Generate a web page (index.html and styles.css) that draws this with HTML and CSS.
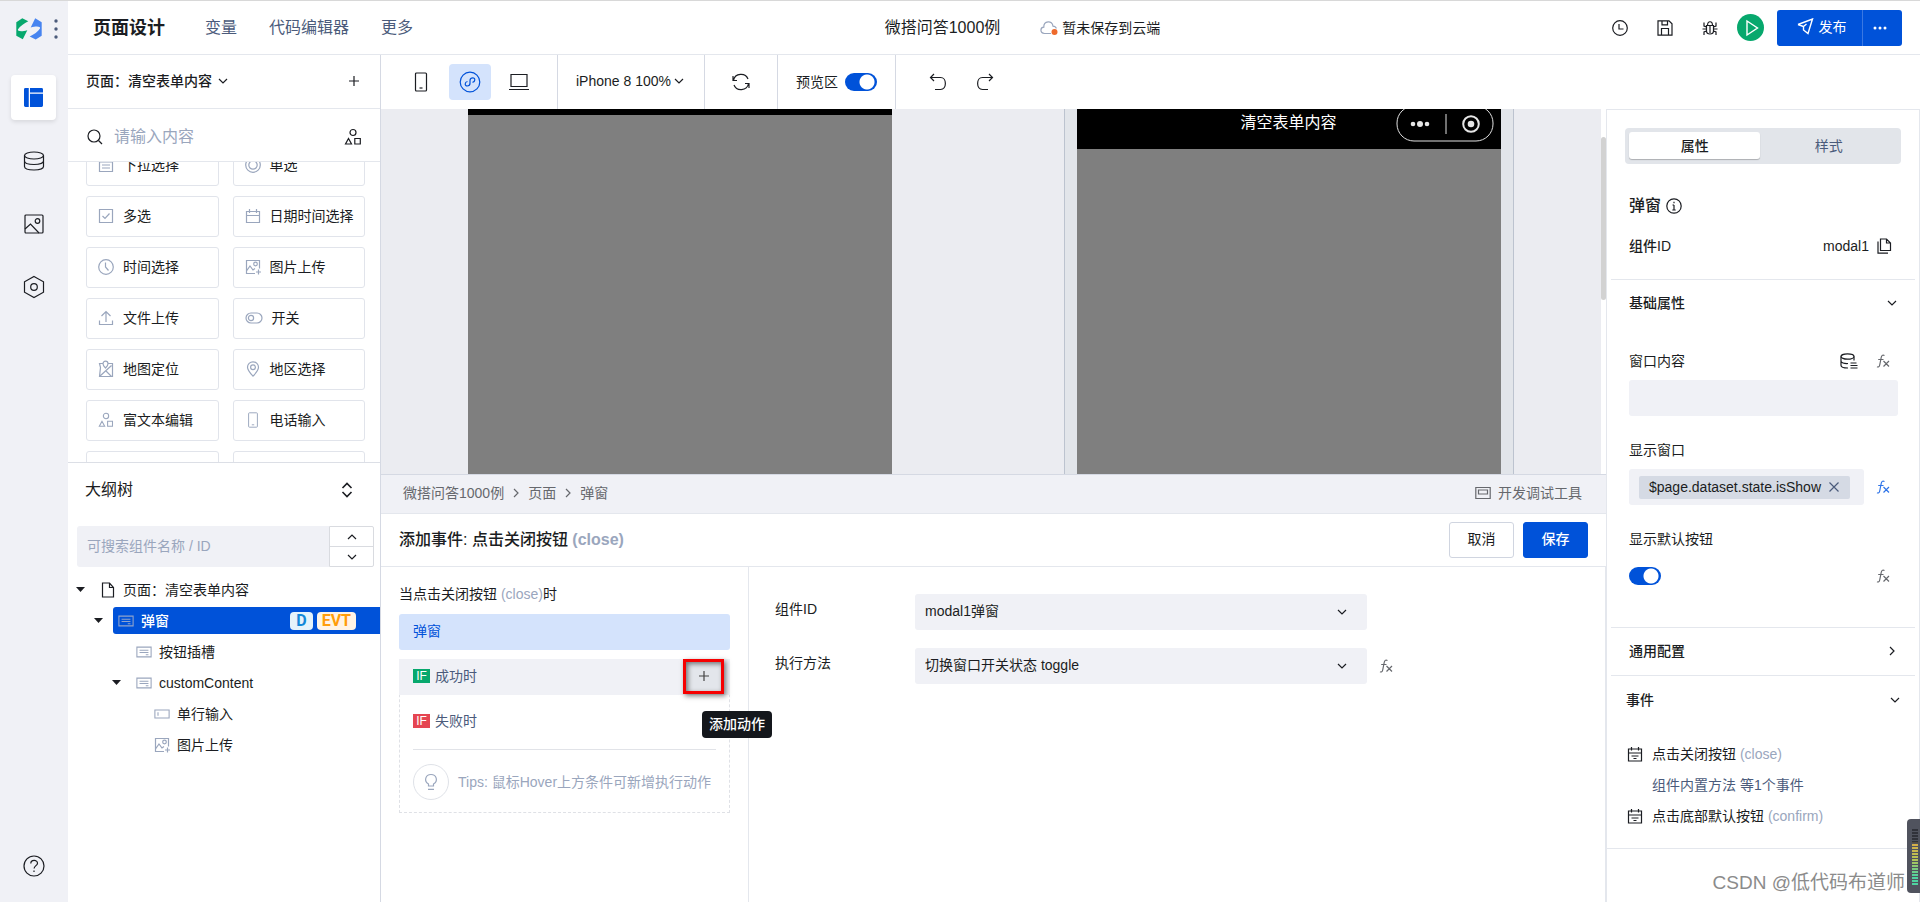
FILE: index.html
```html
<!DOCTYPE html>
<html lang="zh-CN">
<head>
<meta charset="utf-8">
<title>页面设计 - 微搭问答1000例</title>
<link rel="stylesheet" href="styles.css">
</head>
<body>
<svg class="sprite" aria-hidden="true">
  <symbol id="i-down" viewBox="0 0 10 10"><path d="M1 3l4 4 4-4"/></symbol>
  <symbol id="i-up" viewBox="0 0 10 10"><path d="M1 7l4-4 4 4"/></symbol>
  <symbol id="i-right" viewBox="0 0 10 10"><path d="M3 1l4 4-4 4"/></symbol>
  <symbol id="i-plus" viewBox="0 0 12 12"><path d="M6 1v10M1 6h10"/></symbol>
  <symbol id="i-shapes" viewBox="0 0 18 18"><circle cx="9" cy="4.5" r="3"/><path d="M4.5 10.5L1.5 16h6zM10.8 10.5h5.5V16h-5.5z"/></symbol>
  <symbol id="i-list" viewBox="0 0 16 16"><path d="M1.500 1.500h13v13h-13zM1.500 5h13M4 8h8M4 11h8"/></symbol>
  <symbol id="i-radio" viewBox="0 0 16 16"><circle cx="8" cy="8" r="7.300"/><circle cx="8" cy="8" r="4.200"/></symbol>
  <symbol id="i-check" viewBox="0 0 16 16"><path d="M1.500 1.500h13v13h-13zM4.500 8l2.500 2.500 4.500-5"/></symbol>
  <symbol id="i-calendar" viewBox="0 0 16 16"><path d="M1.500 3.500h13v11h-13zM1.500 7.500h13M4.500 1v4M11.500 1v4"/></symbol>
  <symbol id="i-clock" viewBox="0 0 16 16"><circle cx="8" cy="8" r="7.300"/><path d="M7.500 3.500V8l3 3.500"/></symbol>
  <symbol id="i-imgadd" viewBox="0 0 16 16"><path d="M10 14.500H1.500v-13h13v8M1.500 12L5 7l3 4 2-1.500M13.500 10.500v5M11 13h5"/><circle cx="10.500" cy="5" r="1.800"/></symbol>
  <symbol id="i-upload" viewBox="0 0 16 16"><path d="M8 12V1.500M3.500 6L8 1.500 12.500 6M1.500 10.500v4h13v-4"/></symbol>
  <symbol id="i-switch" viewBox="0 0 18 12"><rect x="1" y="1" width="16" height="10" rx="5"/><circle cx="6" cy="6" r="2.600"/></symbol>
  <symbol id="i-map" viewBox="0 0 16 18"><path d="M5 3.500H1.500l1 4-1 9h13v-13H10.500M1.500 16.500l12-11M8 11l5.500 5.500M7.500 8C5.500 6 5 4.800 5 3.700a2.500 2.500 0 015 0C10 4.800 9.500 6 7.500 8z"/></symbol>
  <symbol id="i-pin" viewBox="0 0 14 16"><path d="M7 15.200C3 11 1.500 8.700 1.500 6.300a5.500 5.500 0 0111 0c0 2.400-1.500 4.700-5.500 8.900z"/><circle cx="7" cy="6.300" r="2.400"/></symbol>
  <symbol id="i-phone" viewBox="0 0 14 20"><rect x="1.500" y="1" width="11" height="18" rx="1"/><path d="M5.500 16h3"/></symbol>
  <symbol id="i-block" viewBox="0 0 18 14"><path d="M1 1.500h16v11H1zM4 5h10M4 7.500h10M11 10h3"/></symbol>
  <symbol id="i-input" viewBox="0 0 18 12"><path d="M1 1.500h16v9H1zM4.500 4v4"/></symbol>
  <symbol id="i-file" viewBox="0 0 14 16"><path d="M1.500 1h7l4 4.500V15h-11zM8.500 1v4.500h4"/></symbol>
  <symbol id="i-fx" viewBox="0 0 14 14"><path d="M8.500 1.500C6.500.5 5.600 1.500 5.200 3.500L3.700 11C3.300 13 2.300 13.300 1 12.700M2.200 5.500h5.300M7.500 7l5.500 5.500M13 7l-5.500 5.500"/></symbol>
  <symbol id="i-event" viewBox="0 0 16 16"><path d="M1.500 3h13v12h-13zM1.500 7h13M4.500 1v3.500M11.500 1v3.500M4.500 10h7M6.500 12.500h3"/></symbol>
  <symbol id="i-db" viewBox="0 0 22 20"><ellipse cx="11" cy="4.500" rx="9.500" ry="3.500"/><path d="M1.500 4.500v11c0 2 4 3.500 9.500 3.500s9.500-1.500 9.500-3.500v-11M1.500 10c0 2 4 3.500 9.500 3.500s9.500-1.500 9.500-3.500"/></symbol>
</svg>

<nav class="rail" aria-label="主导航">
  <div class="rail-brand">
    <svg class="logo" viewBox="0 0 26 22"><path fill="#07a86d" d="M.3 4.300L6.300.3 12.300 3.300C8 5.300 4 8.300 2 11.300 1 13.300 5.300 14 11.300 12.300L6.800 21.300.3 17.800z"/><path fill="#4784f0" d="M19.200.3l6.500 4v13.500l-6 3.700-6-3C18 16.500 22 13.500 24 10.500 25 8.300 20.500 7.800 14.700 9.500z"/></svg>
    <svg class="dots-v" viewBox="0 0 4 20"><circle cx="2" cy="2" r="1.700"/><circle cx="2" cy="10" r="1.700"/><circle cx="2" cy="18" r="1.700"/></svg>
  </div>
  <button class="rail-item active" aria-label="页面"><svg class="fill-icon" viewBox="0 0 20 20"><path d="M0 1.500Q0 0 1.500 0H5v20H1.500Q0 20 0 18.500zM6.300 0H18.500Q20 0 20 1.500V4.800H6.300zM6.300 6H20V18.500Q20 20 18.500 20H6.300z"/></svg></button>
  <button class="rail-item" aria-label="数据源"><svg class="icon" width="22" height="20"><use href="#i-db"/></svg></button>
  <button class="rail-item" aria-label="素材"><svg class="icon" width="20" height="20" viewBox="0 0 20 20"><rect x="1" y="1" width="18" height="18" rx="1"/><path d="M1 15l5.500-5L15 19"/><circle cx="13.500" cy="7" r="2.300"/></svg></button>
  <button class="rail-item" aria-label="设置"><svg class="icon" width="22" height="24" viewBox="0 0 22 24"><path d="M11 1.500l9.500 5.300v10.400L11 22.500l-9.500-5.300V6.800z"/><circle cx="11" cy="12" r="3.300"/></svg></button>
  <button class="rail-help" aria-label="帮助"><svg class="icon" width="22" height="22" viewBox="0 0 22 22"><circle cx="11" cy="11" r="10"/><path d="M7.800 8.500c0-4 6.700-4 6.700-.3 0 2.300-3.400 2.600-3.400 5.300M11 15.500v1.500"/></svg></button>
</nav>

<div class="app">
  <header class="topbar">
    <nav class="topnav">
      <h1>页面设计</h1>
      <a href="#var">变量</a>
      <a href="#code">代码编辑器</a>
      <a href="#more">更多</a>
    </nav>
    <div class="doc">
      <span class="doc-name">微搭问答1000例</span>
      <span class="doc-state"><svg class="icon" width="18" height="16" viewBox="0 0 18 16"><path class="cloud" d="M11 13.500H4.500C-.3 13 0 7.500 3.800 7.200 3.500.5 12.500 0 13 6.200c1.500.2 3 .8 3.300 2.300"/><circle class="cloud-dot" cx="14.500" cy="12" r="3"/></svg>暂未保存到云端</span>
    </div>
    <div class="top-actions">
      <button class="ghost" aria-label="历史"><svg class="icon" width="16" height="16" viewBox="0 0 16 16"><circle cx="8" cy="8" r="7.300"/><path d="M7 4v5h4.500"/></svg></button>
      <button class="ghost" aria-label="保存"><svg class="icon" width="16" height="16" viewBox="0 0 16 16"><path d="M1 .8h11l3 3V15.200H1zM5 .8v4h5.500v-4M4.500 15V8.500h7V15"/></svg></button>
      <button class="ghost" aria-label="调试"><svg class="icon" width="16" height="16" viewBox="0 0 16 16"><path d="M4.500 5.500h7v5.500c0 4-7 4-7 0zM5.500 5.500c0-5 5-5 5 0M8 5.500V13M4.500 7L2 6V2.500M11.500 7L14 6V2.500M.5 9h4M11.500 9h4M4.500 11L2 12v3M11.500 11l2.500 1v3"/></svg></button>
      <button class="run" aria-label="预览"><svg width="14" height="18" viewBox="0 0 14 18"><path d="M2 2l10.500 7L2 16z"/></svg></button>
      <div class="publish">
        <button class="publish-main"><svg width="17" height="17" viewBox="0 0 17 17"><path d="M1 6.500L15.500 1 11 15.500 6.500 12V8.500l3-2.500M6.500 12v-3.500L1 6.500"/></svg>发布</button>
        <button class="publish-more" aria-label="更多操作"><svg width="14" height="4" viewBox="0 0 14 4"><circle cx="2" cy="2" r="1.500"/><circle cx="7" cy="2" r="1.500"/><circle cx="12" cy="2" r="1.500"/></svg></button>
      </div>
    </div>
  </header>

  <div class="workspace">
    <aside class="left">
      <div class="page-pick">
        <button class="page-name">页面：清空表单内容<svg class="icon" width="10" height="10"><use href="#i-down"/></svg></button>
        <button class="ghost" aria-label="新建页面"><svg class="icon" width="12" height="12"><use href="#i-plus"/></svg></button>
      </div>
      <label class="search">
        <svg class="icon" width="16" height="16" viewBox="0 0 16 16"><circle cx="7" cy="7" r="6"/><path d="M11.500 11.500L15 15"/></svg>
        <input type="text" placeholder="请输入内容" aria-label="搜索组件">
        <svg class="icon" width="18" height="18"><use href="#i-shapes"/></svg>
      </label>
      <div class="components">
        <div class="component-grid">
          <button><svg class="icon" width="16" height="16"><use href="#i-list"/></svg>下拉选择</button>
          <button><svg class="icon" width="16" height="16"><use href="#i-radio"/></svg>单选</button>
          <button><svg class="icon" width="16" height="16"><use href="#i-check"/></svg>多选</button>
          <button><svg class="icon" width="16" height="16"><use href="#i-calendar"/></svg>日期时间选择</button>
          <button><svg class="icon" width="16" height="16"><use href="#i-clock"/></svg>时间选择</button>
          <button><svg class="icon" width="16" height="16"><use href="#i-imgadd"/></svg>图片上传</button>
          <button><svg class="icon" width="16" height="16"><use href="#i-upload"/></svg>文件上传</button>
          <button><svg class="icon" width="18" height="12"><use href="#i-switch"/></svg>开关</button>
          <button><svg class="icon" width="16" height="18"><use href="#i-map"/></svg>地图定位</button>
          <button><svg class="icon" width="16" height="16"><use href="#i-pin"/></svg>地区选择</button>
          <button><svg class="icon" width="16" height="16"><use href="#i-shapes"/></svg>富文本编辑</button>
          <button><svg class="icon" width="16" height="16"><use href="#i-phone"/></svg>电话输入</button>
          <button aria-label="组件"></button>
          <button aria-label="组件"></button>
        </div>
      </div>
      <section class="outline">
        <header><h2>大纲树</h2><button class="ghost" aria-label="展开"><svg class="icon strong" width="12" height="16" viewBox="0 0 12 16"><path d="M1.500 6L6 1.500 10.500 6M1.500 10L6 14.500 10.500 10"/></svg></button></header>
        <div class="tree-search">
          <input type="text" placeholder="可搜索组件名称 / ID" aria-label="搜索组件名称">
          <div class="stepper">
            <button aria-label="上一个"><svg class="icon" width="10" height="10"><use href="#i-up"/></svg></button>
            <button aria-label="下一个"><svg class="icon" width="10" height="10"><use href="#i-down"/></svg></button>
          </div>
        </div>
        <ul class="tree">
          <li class="d0"><i class="caret"></i><div class="node"><svg class="icon" width="16" height="16"><use href="#i-file"/></svg>页面：清空表单内容</div></li>
          <li class="d1"><i class="caret"></i><div class="node selected"><svg class="icon" width="16" height="14"><use href="#i-block"/></svg>弹窗<span class="badge data">D</span><span class="badge evt">EVT</span></div></li>
          <li class="d2"><i class="caret none"></i><div class="node"><svg class="icon soft" width="16" height="14"><use href="#i-block"/></svg>按钮插槽</div></li>
          <li class="d2"><i class="caret"></i><div class="node"><svg class="icon soft" width="16" height="14"><use href="#i-block"/></svg>customContent</div></li>
          <li class="d3"><i class="caret none"></i><div class="node"><svg class="icon soft" width="16" height="12"><use href="#i-input"/></svg>单行输入</div></li>
          <li class="d3"><i class="caret none"></i><div class="node"><svg class="icon soft" width="16" height="16"><use href="#i-imgadd"/></svg>图片上传</div></li>
        </ul>
      </section>
    </aside>

    <div class="stage">
      <div class="toolbar">
        <div class="tool-group devices">
          <button aria-label="手机"><svg class="icon" width="14" height="20"><use href="#i-phone"/></svg></button>
          <button class="on" aria-label="小程序"><svg class="icon" width="22" height="22" viewBox="0 0 22 22"><circle cx="11" cy="11" r="9.800"/><path d="M8.500 10.500c-3 .5-3 4.500-.3 4.500 1.600 0 2.800-1 2.800-2.700V9.500c0-1.700 1.200-2.700 2.800-2.700 2.700 0 2.700 4-.3 4.500"/></svg></button>
          <button aria-label="电脑"><svg class="icon" width="20" height="18" viewBox="0 0 20 18"><path d="M2 1.500h16v12H2zM0 16.500h20"/></svg></button>
        </div>
        <label class="tool-group zoom"><select aria-label="设备"><option>iPhone 8 100%</option></select><svg class="icon" width="10" height="10"><use href="#i-down"/></svg></label>
        <div class="tool-group refresh"><button class="ghost" aria-label="刷新"><svg class="icon" width="18" height="18" viewBox="0 0 18 18"><path d="M1.500 7.500C3-.2 13.500-.5 16 6M16.500 10.500C15 18.200 4.500 18.500 2 12M1 3v4.500h4M17 15v-4.500h-4"/></svg></button></div>
        <label class="tool-group preview">预览区<input class="switch" type="checkbox" checked></label>
        <div class="tool-group history">
          <button class="ghost" aria-label="撤销"><svg class="icon" width="18" height="18" viewBox="0 0 18 18"><path d="M5 1L1.500 4.500 5 8M1.500 4.500h10c6.500 0 6.500 12 0 12H6"/></svg></button>
          <button class="ghost" aria-label="重做"><svg class="icon" width="18" height="18" viewBox="0 0 18 18"><path d="M13 1l3.500 3.500L13 8M16.500 4.500h-10c-6.500 0-6.500 12 0 12H12"/></svg></button>
        </div>
      </div>

      <div class="stage-body">
        <main class="center">
          <div class="canvas">
            <div class="phone"><div class="phone-edge"></div></div>
            <div class="preview-frame">
              <div class="phone">
                <div class="mini-head">
                  <span class="mini-title">清空表单内容</span>
                  <svg class="capsule" width="98" height="38" viewBox="0 0 98 38"><rect x="1" y="1" width="96" height="35" rx="17"/><g class="solid"><circle cx="17" cy="19" r="2.300"/><circle cx="24" cy="19" r="3"/><circle cx="31" cy="19" r="2.300"/><circle cx="75" cy="19" r="3.300"/></g><path d="M50 9v20"/><circle class="ring" cx="75" cy="19" r="7.800"/></svg>
                </div>
              </div>
            </div>
            <div class="scrollbar"><div class="thumb"></div></div>
          </div>

          <section class="dock">
            <div class="crumbs">
              <span>微搭问答1000例</span><svg class="icon" width="10" height="10"><use href="#i-right"/></svg><span>页面</span><svg class="icon" width="10" height="10"><use href="#i-right"/></svg><span>弹窗</span>
              <button class="devtool"><svg class="icon" width="16" height="14" viewBox="0 0 16 14"><path d="M.8 1.500h14.400v11H.8zM3.500 4h9v4h-9z"/></svg>开发调试工具</button>
            </div>
            <div class="dock-head">
              <h2>添加事件: 点击关闭按钮 <b>(close)</b></h2>
              <button class="btn">取消</button>
              <button class="btn primary">保存</button>
            </div>
            <div class="dock-body">
              <div class="flow">
                <p class="flow-title">当点击关闭按钮 <em>(close)</em>时</p>
                <button class="action">弹窗</button>
                <div class="branches">
                  <div class="branch hover"><span class="if ok">IF</span>成功时
                    <button class="add" aria-label="添加动作"><svg class="icon" width="12" height="12"><use href="#i-plus"/></svg></button>
                    <span class="tooltip">添加动作</span>
                  </div>
                  <div class="branch"><span class="if bad">IF</span>失败时</div>
                  <div class="tips"><span class="bulb"><svg class="icon soft" width="14" height="18" viewBox="0 0 14 18"><path d="M4.500 13v-2C-.5 8 1.500 1.500 7 1.500S14.500 8 9.500 11v2zM4 16.300h6"/></svg></span>Tips: 鼠标Hover上方条件可新增执行动作</div>
                </div>
              </div>
              <form class="config">
                <label for="cid">组件ID</label>
                <div class="select"><select id="cid"><option>modal1弹窗</option></select><svg class="icon" width="10" height="10"><use href="#i-down"/></svg></div>
                <span></span>
                <label for="method">执行方法</label>
                <div class="select"><select id="method"><option>切换窗口开关状态 toggle</option></select><svg class="icon" width="10" height="10"><use href="#i-down"/></svg></div>
                <button type="button" class="ghost fx" aria-label="表达式"><svg class="icon" width="14" height="14"><use href="#i-fx"/></svg></button>
              </form>
            </div>
          </section>
        </main>

        <aside class="props">
          <div class="tabs" role="tablist"><button role="tab" aria-selected="true">属性</button><button role="tab" aria-selected="false">样式</button></div>
          <div class="props-head">
            <h2>弹窗<svg class="icon" width="16" height="16" viewBox="0 0 16 16"><circle cx="8" cy="8" r="7.200"/><path d="M8 3.800v1.500M8 7v5M6.500 7H8M6.300 12h3.400"/></svg></h2>
            <div class="id-row"><strong>组件ID</strong><span>modal1</span><svg class="icon" width="16" height="16" viewBox="0 0 16 16"><path d="M4.500 1h6l4 4v7.500h-10zM10.500 1v4h4M2 3.500v11.700h10"/></svg></div>
          </div>
          <button class="fold">基础属性<svg class="icon" width="10" height="10"><use href="#i-down"/></svg></button>
          <div class="fields">
            <div class="field">
              <div class="field-label"><label for="content">窗口内容</label><svg class="icon" width="18" height="16" viewBox="0 0 18 16"><ellipse cx="7.500" cy="3.500" rx="6.500" ry="2.700"/><path d="M1 3.500v8.700C1 14 4 15 8 15M14 3.500V7.500M1 8c0 1.800 3 2.700 7 2.500M10.500 10h6M10.500 12.500h7M10.500 15h7"/></svg><button class="ghost fx" aria-label="表达式"><svg class="icon" width="14" height="14"><use href="#i-fx"/></svg></button></div>
              <input class="text" id="content" type="text">
            </div>
            <div class="field">
              <div class="field-label"><span>显示窗口</span></div>
              <div class="bind"><div class="bind-box"><span class="tag">$page.dataset.state.isShow<button class="ghost" aria-label="移除"><svg class="icon" width="12" height="12" viewBox="0 0 12 12"><path d="M1.500 1.500l9 9M10.500 1.500l-9 9"/></svg></button></span></div><button class="ghost fx blue" aria-label="表达式"><svg class="icon" width="14" height="14"><use href="#i-fx"/></svg></button></div>
            </div>
            <div class="field">
              <div class="field-label"><label for="defbtn">显示默认按钮</label></div>
              <div class="bind toggle"><input id="defbtn" class="switch" type="checkbox" checked><button class="ghost fx" aria-label="表达式"><svg class="icon" width="14" height="14"><use href="#i-fx"/></svg></button></div>
            </div>
          </div>
          <button class="fold">通用配置<svg class="icon" width="10" height="10"><use href="#i-right"/></svg></button>
          <button class="fold wide">事件<svg class="icon" width="10" height="10"><use href="#i-down"/></svg></button>
          <ul class="events">
            <li><svg class="icon" width="16" height="16"><use href="#i-event"/></svg><span>点击关闭按钮 <em>(close)</em></span></li>
            <li class="sub"><a href="#events">组件内置方法 等1个事件</a></li>
            <li><svg class="icon" width="16" height="16"><use href="#i-event"/></svg><span>点击底部默认按钮 <em>(confirm)</em></span></li>
          </ul>
          <p class="credit">CSDN @低代码布道师</p>
        </aside>
      </div>
    </div>
  </div>
</div>
<div class="meter"><div class="bars"></div></div>
</body>
</html>
```

FILE: styles.css
```css
:root {
  --blue: #0052d9;
  --ink: #1b1d22;
  --line: #e4e7ed;
  --rule: #d5d9e3;
  --panel: #f0f1f6;
  --soft: #9aa6bd;
  --slate: #4b5b7b;
}

* { box-sizing: border-box; }

body {
  margin: 0;
  height: 100vh;
  display: flex;
  overflow: hidden;
  border-top: 1px solid #d8d8d8;
  background: #fff;
  color: var(--ink);
  font: 14px/20px "Liberation Sans", "Noto Sans CJK SC", sans-serif;
}

h1, h2, p, ul { margin: 0; padding: 0; }
h1, h2 { font-weight: 500; }
ul { list-style: none; }
em { font-style: normal; color: var(--soft); }
a { color: inherit; text-decoration: none; }
button, input, select { font: inherit; color: inherit; border: 0; background: none; padding: 0; margin: 0; outline: 0; }
button { display: inline-flex; align-items: center; justify-content: center; }
::placeholder { color: var(--soft); opacity: 1; }
select { appearance: none; }

.sprite { position: absolute; width: 0; height: 0; }
.icon { flex: none; fill: none; stroke: currentColor; stroke-width: 1.2; }
.icon.strong { stroke-width: 1.6; }
.icon.soft { color: var(--soft); }

.switch {
  appearance: none;
  flex: none;
  width: 32px;
  height: 18px;
  border-radius: 9px;
  background: radial-gradient(circle at 22px 9px, #fff 7px, transparent 8px) var(--blue);
}

/* left rail */
.rail { flex: none; width: 68px; display: flex; flex-direction: column; align-items: center; background: var(--panel); padding: 0 1px 25px 0; }
.rail-brand { display: flex; align-items: center; gap: 12px; height: 55px; padding-left: 6px; margin-bottom: 19px; }
.logo { width: 26px; height: 22px; }
.dots-v { width: 4px; height: 20px; fill: var(--slate); }
.rail-item { width: 45px; height: 45px; margin-bottom: 18px; border-radius: 4px; }
.rail-item.active { background: #fff; color: var(--blue); box-shadow: 0 2px 4px #0000001a; }
.fill-icon { width: 19px; height: 19px; fill: currentColor; }
.rail-help { margin-top: auto; }

.app { flex: 1; min-width: 0; display: flex; flex-direction: column; }

/* top bar */
.topbar { flex: none; height: 54px; display: grid; grid-template-columns: 1fr auto 1fr; align-items: center; border-bottom: 1px solid var(--line); padding: 0 18px 0 25px; }
.topnav { display: flex; align-items: center; gap: 32px; font-size: 16px; color: var(--slate); }
.topnav h1 { font-size: 18px; font-weight: 700; color: var(--ink); margin-right: 8px; }
.doc { display: flex; align-items: center; gap: 40px; padding-left: 50px; }
.doc-name { font-size: 16px; }
.doc-state { display: flex; align-items: center; gap: 4px; }
.cloud { stroke: var(--soft); }
.cloud-dot { fill: #ee6a2c; stroke: none; }
.top-actions { display: flex; align-items: center; justify-content: flex-end; gap: 29px; }
.run { width: 27px; height: 27px; border-radius: 50%; background: #07a86d; padding-left: 3px; margin-left: -10px; }
.run svg, .publish-main svg { fill: none; stroke: #fff; stroke-width: 1.4; }
.publish { display: flex; height: 36px; border-radius: 3px; overflow: hidden; background: var(--blue); color: #fff; margin-left: -16px; }
.publish-main { width: 86px; gap: 5px; padding: 0 0 2px 4px; border-right: 1px solid #3a78e2; }
.publish-more { width: 39px; padding-right: 6px; }
.publish-more svg { fill: #fff; }

.workspace { flex: 1; min-height: 0; display: flex; }

/* left panel */
.left { flex: none; width: 313px; display: flex; flex-direction: column; border-right: 1px solid var(--rule); }
.page-pick { flex: none; height: 54px; display: flex; align-items: center; justify-content: space-between; padding: 0 20px 2px 18px; border-bottom: 1px solid var(--line); }
.page-name { gap: 6px; font-weight: 500; }
.search { flex: none; height: 53px; display: flex; align-items: center; gap: 11px; padding: 4px 18px 0 19px; border-bottom: 1px solid var(--line); font-size: 16px; }
.search input { flex: 1; min-width: 0; }
.components { flex: none; height: 301px; overflow: hidden; padding: 0 15px 0 18px; border-bottom: 1px solid #dcdfe6; }
.component-grid { display: grid; grid-template-columns: 1fr 1fr; grid-auto-rows: 41px; gap: 10px 14px; margin-top: -17px; }
.component-grid button { justify-content: flex-start; gap: 9px; padding: 0 0 1px 11px; border: 1px solid #e1e4eb; border-radius: 3px; }
.component-grid .icon { color: var(--soft); }

.outline { flex: 1; min-height: 0; }
.outline header { display: flex; align-items: center; justify-content: space-between; padding: 13px 27px 0 17px; height: 41px; }
.outline h2 { font-size: 16px; font-weight: 400; }
.tree-search { display: flex; margin: 22px 6px 0 9px; height: 41px; }
.tree-search input { flex: 1; min-width: 0; background: var(--panel); border-radius: 3px 0 0 3px; padding: 0 0 2px 10px; }
.stepper { width: 45px; display: grid; border: 1px solid #d9dbe0; border-radius: 0 2px 2px 0; }
.stepper button + button { border-top: 1px solid #d9dbe0; }
.tree { padding: 7px 0 0 8px; }
.tree li { display: flex; align-items: center; gap: 10px; height: 31px; }
.caret { flex: none; width: 9px; height: 5px; background: var(--ink); clip-path: polygon(0 0, 100% 0, 50% 100%); }
.caret.none { visibility: hidden; }
.node { flex: 1; display: flex; align-items: center; gap: 7px; height: 27px; padding-left: 5px; }
.d1 { padding-left: 18px; }
.d2 { padding-left: 36px; }
.d3 { padding-left: 54px; }
.node.selected { background: var(--blue); color: #fff; font-weight: 500; border-radius: 3px 0 0 3px; padding-right: 24px; }
.node.selected .icon { color: #90a4cc; }
.badge { height: 18px; border-radius: 4px; padding: 0 6px; font: 700 16px/18px Roboto, sans-serif; }
.badge.data { margin-left: auto; background: #e6f3fb; color: #1488d8; }
.badge.evt { background: #fff4e6; color: #ff9d0a; margin-left: -3px; padding: 0 5px; }

/* toolbar */
.stage { flex: 1; min-width: 0; display: flex; flex-direction: column; }
.toolbar { flex: none; display: flex; height: 54px; }
.tool-group { display: flex; align-items: center; border-right: 1px solid var(--rule); }
.devices { padding: 0 17px 0 19px; gap: 7px; }
.devices button { width: 42px; height: 36px; border-radius: 4px; }
.devices .on { background: #d4e3fc; color: var(--blue); }
.zoom { padding: 0 20px 2px 18px; gap: 3px; }
.refresh { padding: 0 27px; }
.preview { padding: 0 18px; gap: 7px; }
.history { border-right: 0; padding: 0 33px; gap: 29px; }

.stage-body { flex: 1; min-height: 0; display: flex; }
.center { flex: 1; min-width: 0; display: flex; flex-direction: column; }

/* canvas */
.canvas { flex: 1; min-height: 0; position: relative; display: flex; justify-content: center; gap: 172px; background: #ebecf1; padding-right: 6px; overflow: hidden; }
.phone { width: 424px; background: #7f7f7f; }
.phone-edge { height: 6px; background: #000; }
.preview-frame { display: flex; padding: 0 12px; background: #e2e5ea; border: solid #bcc3cf; border-width: 0 1px; }
.mini-head { height: 40px; display: grid; grid-template-columns: 1fr auto 1fr; align-items: start; background: #000; color: #fff; overflow: hidden; }
.mini-title { grid-column: 2; font-size: 16px; line-height: 28px; }
.capsule { justify-self: end; margin: -4px 7px 0 0; fill: none; stroke: #e0e0e0; }
.capsule .solid { fill: #e6e6e6; stroke: none; }
.capsule .ring { stroke-width: 2; stroke: #e6e6e6; }
.scrollbar { position: absolute; right: 0; top: 0; bottom: 0; width: 5px; background: #fff; padding-top: 28px; }
.thumb { height: 163px; border-radius: 3px; background: #d2d2d2; }

/* event dock */
.dock { flex: none; height: 428px; display: flex; flex-direction: column; border-top: 1px solid var(--rule); }
.crumbs { flex: none; height: 39px; display: flex; align-items: center; gap: 7px; padding: 0 24px 2px 22px; background: var(--panel); border-bottom: 1px solid var(--line); color: #66686d; }
.devtool { margin-left: auto; gap: 7px; }
.dock-head { flex: none; height: 53px; display: flex; align-items: center; gap: 9px; padding: 0 18px; border-bottom: 1px solid var(--line); }
.dock-head h2 { flex: 1; font-size: 16px; }
.dock-head b { color: var(--soft); }
.btn { width: 65px; height: 36px; border: 1px solid #d0d5e0; border-radius: 3px; padding-bottom: 3px; }
.btn.primary { background: var(--blue); border-color: var(--blue); color: #fff; font-weight: 500; }
.dock-body { flex: 1; min-height: 0; display: flex; border-right: 1px solid var(--line); }
.flow { flex: none; width: 368px; padding: 17px 18px; border-right: 1px solid var(--line); }
.action { width: 100%; height: 36px; margin: 10px 0 9px; justify-content: flex-start; padding: 0 14px 2px; border-radius: 3px; background: #d4e3fc; color: var(--blue); }
.branches { border: 1px dashed #dfe1e6; }
.branch { position: relative; height: 45px; display: flex; align-items: center; gap: 5px; padding: 0 13px 11px; color: var(--slate); }
.branch.hover { height: 36px; margin: -1px -1px 9px; padding: 0 6px 2px 14px; background: var(--panel); }
.if { width: 17px; height: 14px; color: #fff; font-size: 12px; line-height: 14px; text-align: center; }
.if.ok { background: #07a86d; }
.if.bad { background: #e54552; }
.add { width: 41px; height: 35px; margin-left: auto; border: 3px solid #f60000; background: #e3e6eb; color: #444; box-shadow: 2px 2px 5px #00000080, inset 2px 2px 5px #00000080; }
.tooltip { position: absolute; top: 52px; right: -42px; padding: 3px 7px 4px; border-radius: 4px; background: #14171c; color: #fff; font-weight: 500; white-space: nowrap; z-index: 2; }
.tips { display: flex; align-items: center; gap: 9px; margin: 0 13px; padding: 14px 0 12px; border-top: 1px solid #e1e3e8; color: var(--soft); white-space: nowrap; }
.bulb { flex: none; width: 36px; height: 36px; display: grid; place-items: center; border: 1px solid #dfe2e8; border-radius: 50%; }
.config { flex: 1; min-width: 0; display: grid; grid-template-columns: 140px minmax(0, 452px) auto; justify-content: start; align-content: start; grid-auto-rows: 36px; row-gap: 18px; align-items: center; padding: 27px 26px; }
.config label { padding-bottom: 6px; }
.select { position: relative; display: grid; }
.select select { height: 36px; padding: 0 32px 3px 10px; background: var(--panel); border-radius: 3px; }
.select .icon { position: absolute; right: 20px; top: 13px; }
.fx { color: #66686d; }
.config .fx { margin-left: 12px; }
.fx.blue { color: #2f74e8; }

/* property panel */
.props { position: relative; flex: none; width: 314px; border: solid var(--line); border-width: 1px 1px 0; }
.tabs { display: grid; grid-template-columns: 49fr 51fr; margin: 18px 18px 0; height: 36px; padding: 4px 4px 5px; border-radius: 4px; background: #e2e5ea; color: var(--slate); }
.tabs [aria-selected="true"] { background: #fff; color: var(--ink); font-weight: 500; border-radius: 3px; box-shadow: 0 1px 1px #0000003d; }
.props-head { margin: 0 4px; padding: 32px 23px 23px 18px; border-bottom: 1px solid var(--line); }
.props-head h2 { display: flex; align-items: center; gap: 5px; font-size: 16px; margin-bottom: 20px; }
.id-row { display: flex; align-items: center; gap: 7px; }
.id-row strong { flex: 1; font-weight: 500; }
.fold { display: flex; justify-content: space-between; width: calc(100% - 8px); height: 48px; margin: 0 4px; padding: 0 18px 2px; border-top: 1px solid var(--line); font-weight: 500; }
.props-head + .fold { border-top: 0; }
.fold.wide { padding: 0 15px 0 15px; }
.fields { padding: 23px 21px 33px 22px; display: grid; gap: 24px; }
.field-label { display: flex; align-items: center; gap: 18px; height: 20px; padding-right: 8px; margin-bottom: 9px; }
.field-label > :first-child { flex: 1; }
.text { display: block; width: 100%; height: 36px; border-radius: 3px; background: var(--panel); }
.bind { display: flex; align-items: center; justify-content: space-between; height: 36px; padding-right: 8px; }
.bind-box { width: 235px; height: 36px; display: flex; align-items: center; padding: 0 14px 0 10px; border-radius: 3px; background: var(--panel); }
.tag { flex: 1; height: 23px; display: flex; align-items: center; justify-content: space-between; padding: 0 10px; border-radius: 2px; background: #d5dae4; }
.tag button { color: var(--slate); }
.events { padding: 15px 20px 17px; border-bottom: 1px solid var(--line); }
.events li { display: flex; align-items: center; gap: 9px; height: 31px; }
.events .sub { padding-left: 25px; color: var(--slate); }
.credit { position: absolute; right: 14px; bottom: 5px; font-size: 19px; line-height: 28px; color: #8b8b8b; text-shadow: 1px 1px 1px #fff; white-space: nowrap; }

.meter { position: fixed; right: 0; bottom: 9px; width: 13px; height: 74px; border-radius: 4px 0 0 4px; background: #50535e; padding: 9px 2px 8px 5px; }
.bars { height: 100%; background: repeating-linear-gradient(#50535e 0 1px, transparent 1px 3px), linear-gradient(#30323a 0 25%, #d8ac48 27%, #b5c455 55%, #4fd3a0 85%); }
```
